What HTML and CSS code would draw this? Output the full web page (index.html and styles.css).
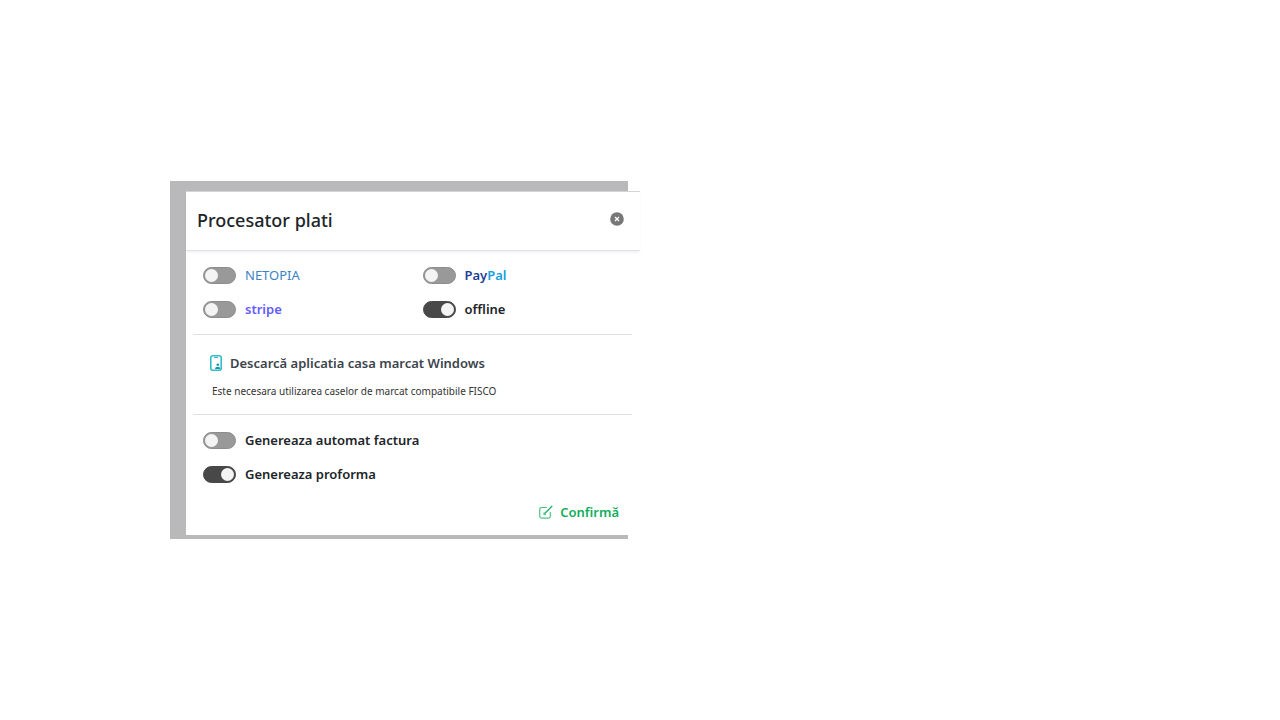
FILE: index.html
```html
<!DOCTYPE html>
<html lang="ro">
	<head>
		<meta charset="utf-8" />
		<title>Procesator plati</title>
		<link rel="stylesheet" href="styles.css">
	</head>
	<body>
		<div class="page">
			<div class="backdrop">
				<div class="modal" role="dialog" aria-labelledby="title">
					<div class="modal-header">
						<h1 id="title">Procesator plati</h1>
						<button type="button" class="close" aria-label="Close">
							<svg width="14" height="14" viewBox="0 0 14 14">
								<circle cx="7" cy="7" r="6.8" fill="#777"/>
								<path d="M5 5l4 4M9 5l-4 4" stroke="#fff" stroke-width="1.3"/>
							</svg>
						</button>
					</div>
					<div class="modal-body">
						<div class="section processors">
							<label class="option"><input type="checkbox" class="switch"><span class="netopia">NETOPIA</span></label>
							<label class="option"><input type="checkbox" class="switch"><span class="paypal">Pay<span class="pal">Pal</span></span></label>
							<label class="option"><input type="checkbox" class="switch"><span class="stripe">stripe</span></label>
							<label class="option"><input type="checkbox" class="switch" checked><span>offline</span></label>
						</div>
						<div class="section download">
							<a href="#" class="download-link">
								<svg width="12" height="16" viewBox="0 0 12 16" fill="none" stroke="#35bccb">
									<rect x="0.8" y="0.8" width="10.4" height="14.4" rx="2" stroke-width="1.6"/>
									<path d="M4 2.5h4" stroke-width="1.2"/>
									<circle cx="7.8" cy="9.8" r="1.3" fill="#1599b0" stroke="none"/>
									<path d="M5 14c0-3 5.4-3 5.4 0z" fill="#1599b0" stroke="none"/>
								</svg>
								<span>Descarcă aplicatia casa marcat Windows</span>
							</a>
							<p class="note">Este necesara utilizarea caselor de marcat compatibile FISCO</p>
						</div>
						<div class="section documents">
							<label class="option"><input type="checkbox" class="switch"><span>Genereaza automat factura</span></label>
							<label class="option"><input type="checkbox" class="switch" checked><span>Genereaza proforma</span></label>
						</div>
					</div>
					<div class="modal-footer">
						<button type="button" class="confirm">
							<svg width="14" height="14" viewBox="0 0 14 14" fill="none" stroke="#4cc586" stroke-width="1.2">
								<path d="M8 2.5H2.5a1.8 1.8 0 0 0-1.8 1.8v7a1.8 1.8 0 0 0 1.8 1.8h7a1.8 1.8 0 0 0 1.8-1.8V7"/>
								<path d="M5.5 8.8L13.2 1" stroke="#2bb56e" stroke-width="1.5"/>
								<path d="M5 7.5v2h2"/>
							</svg>
							<span>Confirmă</span>
						</button>
					</div>
				</div>
			</div>
		</div>
	</body>
</html>
```

FILE: styles.css
```css
*{
	margin: 0;
	padding: 0;
	box-sizing: border-box;
}
body{
	background: #fff;
	color: #212529;
	font-family: "Noto Sans", "Open Sans", sans-serif;
	font-size: 13px;
	line-height: 18px;
}
button{
	border: 0;
	background: none;
	font: inherit;
	cursor: pointer;
}
svg{
	display: block;
	flex: none;
}
.page{
	display: flex;
	align-items: center;
	width: 50%;
	min-width: 640px;
	min-height: 100vh;
	padding: 0 12px 0 170px;
}
.backdrop{
	flex: 1;
	padding: 10px 0 4px 16px;
	background: #b9b9bb;
}
/* the dialog runs past the right edge of the backdrop */
.modal{
	margin-right: -12px;
	border-top: 1px solid #d4d4d6;
	background: #fff;
}
.modal-header{
	display: flex;
	align-items: center;
	justify-content: space-between;
	height: 59px;
	padding: 0 16px 2px 11px;
	border-bottom: 1px solid #dee2e6;
	box-shadow: 0 2px 3px -1px rgba(0,0,0,0.08);
}
.modal-header h1{
	font-size: 18px;
	font-weight: 500;
	line-height: 28px;
}
.close{
	padding-bottom: 2px;
}
.modal-body{
	padding: 0 8px 0 7px;
}
.section{
	padding: 7px 0 8px;
	border-bottom: 1px solid #dfe2e5;
}
.processors{
	display: grid;
	grid-template-columns: 1fr 1fr;
}
.option{
	display: flex;
	align-items: center;
	gap: 9px;
	height: 34px;
	padding-left: 10px;
	font-weight: 600;
	cursor: pointer;
}
.switch{
	appearance: none;
	flex: none;
	width: 33px;
	height: 17px;
	padding: 1px;
	border: 1px solid #8c8c8c;
	border-radius: 9px;
	background: #999;
	cursor: pointer;
}
.switch::before{
	content: "";
	display: block;
	width: 13px;
	height: 13px;
	border-radius: 50%;
	background: #f4f4f4;
}
.switch:checked{
	border-color: #484848;
	background: #484848;
}
.switch:checked::before{
	margin-left: auto;
}
.netopia{
	color: #3c82c4;
	font-weight: 400;
}
.paypal{
	color: #1f3f94;
}
.pal{
	color: #169fe0;
}
.stripe{
	color: #635bff;
}
.download{
	padding: 19px 0 14px 17px;
}
.download-link{
	display: flex;
	align-items: center;
	gap: 8px;
	color: #3c444c;
	font-weight: 600;
	text-decoration: none;
}
.note{
	margin-top: 10px;
	padding-left: 2px;
	color: #333;
	font-size: 10px;
}
.documents{
	padding: 8px 0 0;
	border-bottom: 0;
}
.modal-footer{
	display: flex;
	justify-content: flex-end;
	padding: 12px 21px 14px;
}
.confirm{
	display: flex;
	align-items: center;
	gap: 7px;
	color: #12ad5b;
	font-weight: 600;
}
```
